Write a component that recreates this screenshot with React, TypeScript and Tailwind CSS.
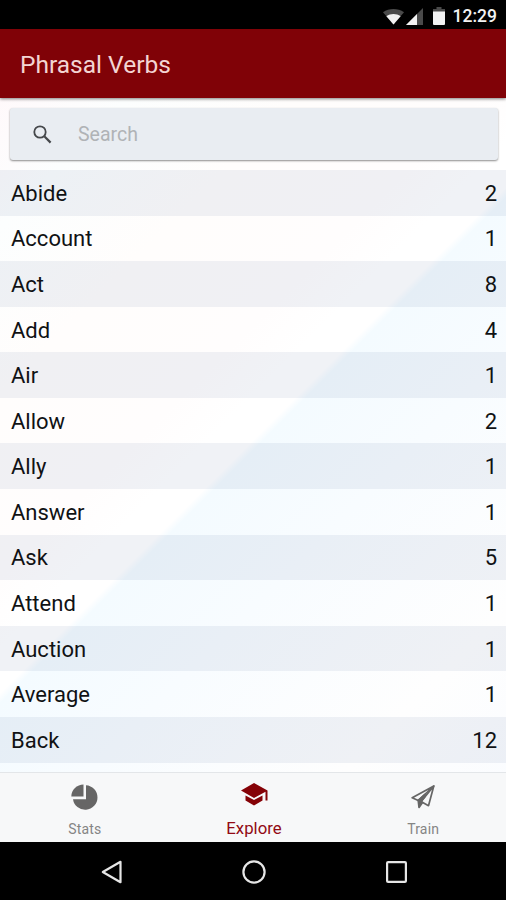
import React, { useState } from 'react';

interface Verb {
  name: string;
  count: number;
}

const verbs: Verb[] = [
  { name: 'Abide', count: 2 },
  { name: 'Account', count: 1 },
  { name: 'Act', count: 8 },
  { name: 'Add', count: 4 },
  { name: 'Air', count: 1 },
  { name: 'Allow', count: 2 },
  { name: 'Ally', count: 1 },
  { name: 'Answer', count: 1 },
  { name: 'Ask', count: 5 },
  { name: 'Attend', count: 1 },
  { name: 'Auction', count: 1 },
  { name: 'Average', count: 1 },
  { name: 'Back', count: 12 },
];

function StatusBar() {
  return (
    <div className="flex h-[29px] shrink-0 items-center justify-end bg-black pt-[3px] pr-[9px] text-[#f2f2f2]">
      <svg width="21" height="17" viewBox="0 0 21 17">
        <path d="M10.5 16.5 0 4.2C6 0 15 0 21 4.2Z" fill="#4a4a4a" />
        <path d="M10.5 16.5 3.4 8.2C7.5 5.4 13.5 5.4 17.6 8.2Z" fill="#f2f2f2" />
      </svg>
      <svg width="17" height="17" viewBox="0 0 17 17" className="ml-0.5">
        <path d="M0 17 17 0V17Z" fill="#4a4a4a" />
        <path d="M0 17 11 6V17Z" fill="#f2f2f2" />
      </svg>
      <svg width="12" height="18" viewBox="0 0 12 18" className="ml-2.5">
        <path d="M3.5 0h5v2H12v3H0V2h3.5z" fill="#4a4a4a" />
        <path d="M0 4.5h12V17a1 1 0 0 1-1 1H1a1 1 0 0 1-1-1z" fill="#f2f2f2" />
      </svg>
      <span className="ml-2 text-[17.5px] leading-5 font-medium">12:29</span>
    </div>
  );
}

function SearchBox() {
  const [query, setQuery] = useState('');

  return (
    <label className="mt-2.5 mr-2 ml-2.5 flex h-[52px] shrink-0 items-center rounded-[3px] bg-[#e9edf2] pl-[23px] shadow-[0_1px_2px_rgba(0,0,0,0.45)]">
      <svg width="19" height="19" viewBox="0 0 19 19" fill="none" stroke="#45484b">
        <circle cx="7" cy="7" r="5.7" strokeWidth="1.8" />
        <path d="m11.3 11.3 6.3 6.3" strokeWidth="2.2" />
      </svg>
      <input
        value={query}
        onChange={(e) => setQuery(e.target.value)}
        placeholder="Search"
        className="ml-[26px] flex-1 bg-transparent pt-px text-[19.5px] outline-none placeholder:text-[#b0b3b6]"
      />
    </label>
  );
}

function VerbList() {
  return (
    <ul className="mt-[10px] flex-1 overflow-hidden">
      {verbs.map((verb) => (
        <li
          key={verb.name}
          className="flex h-[45.58px] items-center justify-between pt-px pr-[9px] pl-[11px] text-[22px] text-[#101214] odd:bg-[#2a4880]/7"
        >
          <span>{verb.name}</span>
          <span>{verb.count}</span>
        </li>
      ))}
    </ul>
  );
}

function TabBar() {
  return (
    <nav className="grid h-[70px] shrink-0 grid-cols-3 border-t border-[#e3e6e9] bg-[#f7f8f9] text-[#858585]">
      <button className="flex flex-col items-center">
        <svg width="27" height="27" viewBox="0 0 27 27" className="mt-[11px] ml-px" fill="#666">
          <path d="M12.5 0.5V12.5H0.3A12.2 12.2 0 0 1 12.5 0.5Z" />
          <path d="M15 1.2A12.3 12.3 0 1 1 2 15.2H15Z" />
        </svg>
        <span className="mt-[10px] ml-px text-[14px] leading-4 tracking-[0.2px]">Stats</span>
      </button>
      <button className="flex flex-col items-center text-[#920a14]">
        <svg width="27" height="23" viewBox="0 0 27 23" className="mt-[10px] ml-[3px]" fill="#850207">
          <path d="M13 0 26.5 7.5V17.5H24.5V8.8L13 15 0 7.5Z" />
          <path d="M4.5 12.6 13 17 21.5 12.6V17.5L13 22.5 4.5 17.5Z" />
        </svg>
        <span className="mt-[12px] ml-0.5 text-[16.8px] leading-5">Explore</span>
      </button>
      <button className="flex flex-col items-center">
        <svg
          width="24"
          height="24"
          viewBox="0 0 24 24"
          className="mt-[12px] ml-[3px]"
          fill="none"
          stroke="#666"
          strokeWidth="1.7"
          strokeLinejoin="round"
        >
          <path d="M22.8 1 1.2 12.8l6 2.7L22.8 1Z" />
          <path d="M22.8 1 10 16.6l7.5 4.1L22.8 1Z" />
          <path d="M7.2 15.5 8 22.5l3.5-5L10 16.6 14 11.5V9.3Z" fill="#666" />
        </svg>
        <span className="mt-[12px] ml-[3px] text-[14px] leading-4 tracking-[0.2px]">Train</span>
      </button>
    </nav>
  );
}

function NavigationBar() {
  return (
    <div className="flex h-[58px] shrink-0 items-center justify-between bg-black pt-px pr-[99px] pl-[101px]">
      <svg width="21" height="24" viewBox="0 0 21 24" fill="none" stroke="#e6e6e6" strokeWidth="2.2">
        <path d="M19.5 1.8v20.4L1.8 12Z" strokeLinejoin="round" />
      </svg>
      <svg width="24" height="24" viewBox="0 0 24 24" fill="none" stroke="#e6e6e6" strokeWidth="2.2">
        <circle cx="12" cy="12" r="10.6" />
      </svg>
      <svg width="21" height="22" viewBox="0 0 21 22" fill="none" stroke="#e6e6e6" strokeWidth="2.2">
        <rect x="1.1" y="1.1" width="18.8" height="19.8" rx="1" />
      </svg>
    </div>
  );
}

export default function App() {
  return (
    <div className="flex h-[900px] w-[506px] flex-col overflow-hidden bg-white font-[Roboto,sans-serif]">
      <StatusBar />
      <header className="z-10 flex h-[69px] shrink-0 items-center bg-[#800207] pl-[20px] shadow-[0_1px_3px_rgba(0,0,0,0.5)]">
        <h1 className="pt-[3px] text-[24.5px] text-[#f3d5d3]">Phrasal Verbs</h1>
      </header>
      <main className="flex min-h-0 flex-1 flex-col bg-[linear-gradient(135deg,#fff9fb_0px,#fcfefe_90px,#fffdfc_210px,#fffdfd_340px,#ffffff_390px,#ffffff_421px,#f4fbff_428px,#f8fcff_540px,#fefefe_720px,#fafcff_860px)]">
        <SearchBox />
        <VerbList />
      </main>
      <TabBar />
      <NavigationBar />
    </div>
  );
}
